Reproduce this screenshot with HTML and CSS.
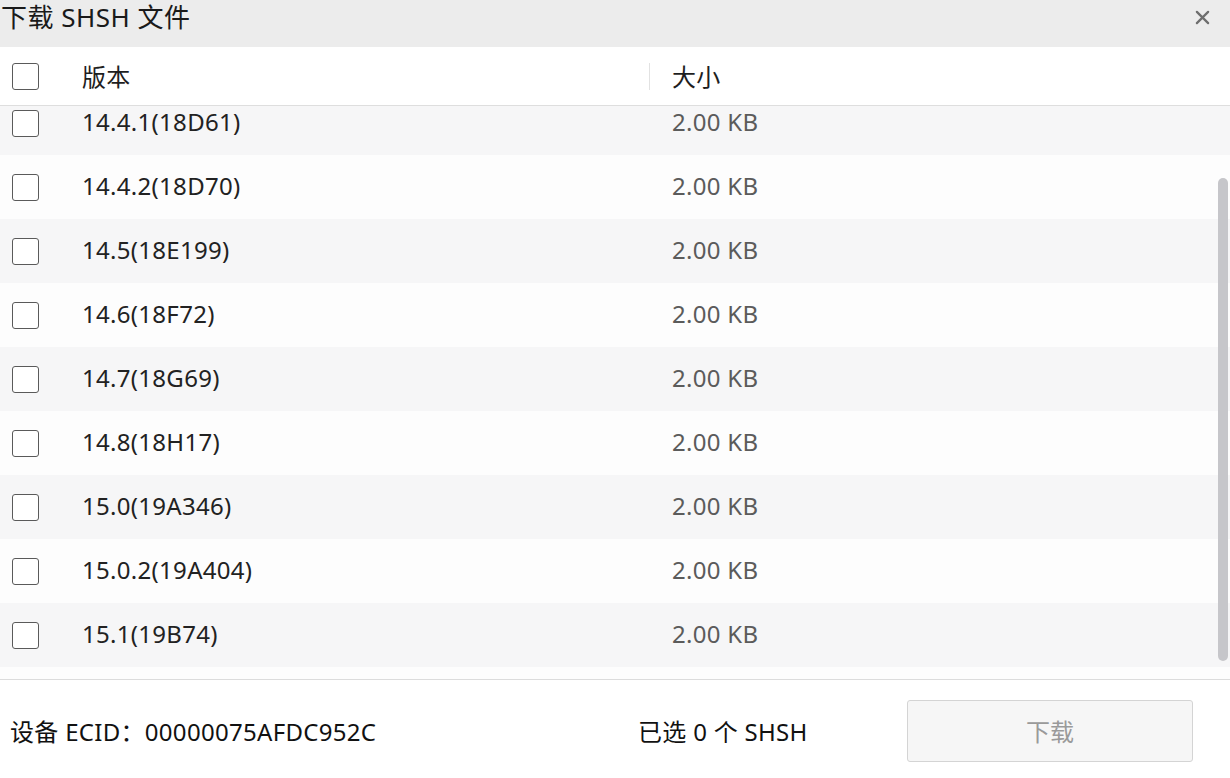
FILE: index.html
```html
<!DOCTYPE html>
<html lang="zh-CN">
<head>
    <meta charset="UTF-8">
    <title>下载 SHSH 文件</title>
    <link rel="stylesheet" href="styles.css">
</head>
<body>
<div class="dialog">
    <div class="titlebar">
        <span class="title">下载 SHSH 文件</span>
        <svg class="close" viewBox="0 0 16 16" width="16" height="16">
            <path d="M2 2L14 14M14 2L2 14" stroke="#6e6e6e" stroke-width="2.4" stroke-linecap="round"/>
        </svg>
    </div>

    <div class="table-head">
        <span class="cell-check"><span class="checkbox"></span></span>
        <span class="th-version">版本</span>
        <span class="th-size">大小</span>
    </div>

    <div class="list">
        <div class="rows">
            <div class="row"><span class="cell-check"><span class="checkbox"></span></span><span class="version">14.4.1(18D61)</span><span class="size">2.00 KB</span></div>
            <div class="row"><span class="cell-check"><span class="checkbox"></span></span><span class="version">14.4.2(18D70)</span><span class="size">2.00 KB</span></div>
            <div class="row"><span class="cell-check"><span class="checkbox"></span></span><span class="version">14.5(18E199)</span><span class="size">2.00 KB</span></div>
            <div class="row"><span class="cell-check"><span class="checkbox"></span></span><span class="version">14.6(18F72)</span><span class="size">2.00 KB</span></div>
            <div class="row"><span class="cell-check"><span class="checkbox"></span></span><span class="version">14.7(18G69)</span><span class="size">2.00 KB</span></div>
            <div class="row"><span class="cell-check"><span class="checkbox"></span></span><span class="version">14.8(18H17)</span><span class="size">2.00 KB</span></div>
            <div class="row"><span class="cell-check"><span class="checkbox"></span></span><span class="version">15.0(19A346)</span><span class="size">2.00 KB</span></div>
            <div class="row"><span class="cell-check"><span class="checkbox"></span></span><span class="version">15.0.2(19A404)</span><span class="size">2.00 KB</span></div>
            <div class="row"><span class="cell-check"><span class="checkbox"></span></span><span class="version">15.1(19B74)</span><span class="size">2.00 KB</span></div>
        </div>
        <div class="scrollbar"></div>
    </div>

    <div class="footer">
        <span class="ecid">设备 ECID：00000075AFDC952C</span>
        <span class="selected">已选 0 个 SHSH</span>
        <button class="download" disabled>下载</button>
    </div>
</div>
</body>
</html>
```

FILE: styles.css
```css
* {
    box-sizing: border-box;
    margin: 0;
    padding: 0;
}

body {
    background-color: #fdfdfd;
    font-family: 'Noto Sans', 'Noto Sans CJK SC', sans-serif;
    color: #1e1e1e;
    width: 1230px;
    height: 778px;
    overflow: hidden;
}

.dialog {
    display: flex;
    flex-direction: column;
    height: 778px;
}

/* 标题栏 */
.titlebar {
    height: 47px;
    background-color: #ececec;
    display: flex;
    align-items: flex-start;
    justify-content: space-between;
    padding: 1px 20px 0 1px;
}

.title {
    font-size: 26px;
    line-height: 32px;
    letter-spacing: 0.5px;
    color: #1a1a1a;
}

.close {
    width: 15px;
    height: 15px;
    margin-top: 9px;
}

/* 表头 */
.table-head {
    height: 59px;
    display: grid;
    grid-template-columns: 82px 567px 1fr;
    align-items: center;
    border-bottom: 1px solid #dedede;
    background-color: #fff;
    font-size: 24px;
    letter-spacing: 0.3px;
}

.cell-check {
    display: flex;
    align-items: center;
    padding-left: 12px;
}

.checkbox {
    display: block;
    width: 27px;
    height: 27px;
    border: 1.5px solid #5a5a5a;
    border-radius: 3px;
    background-color: #fff;
}

.th-version {
    margin-top: -2px;
}

.th-size {
    border-left: 1px solid #e2e2e2;
    padding-left: 22px;
    line-height: 27px;
}

/* 列表 */
.list {
    position: relative;
    height: 573px;
    overflow: hidden;
}

.rows {
    margin-top: -15px;
}

.row {
    height: 64px;
    display: grid;
    grid-template-columns: 82px 567px 1fr;
    align-items: center;
    font-size: 24px;
    letter-spacing: 0.3px;
}

.row:nth-child(odd) {
    background-color: #f6f6f7;
}

.row:nth-child(even) {
    background-color: #fdfdfd;
}

.version {
    color: #222;
    margin-top: -3px;
}

.size {
    padding-left: 23px;
    color: #5b5b5b;
    margin-top: -3px;
}

.scrollbar {
    position: absolute;
    right: 2px;
    top: 72px;
    width: 10px;
    height: 483px;
    border-radius: 5px;
    background-color: #c6c6ca;
}

/* 底部 */
.footer {
    flex: 1;
    border-top: 1px solid #dcdcdc;
    background-color: #fff;
    display: grid;
    grid-template-columns: 628px 1fr 286px;
    align-items: center;
    padding: 0 37px 0 10px;
    font-size: 24px;
    letter-spacing: 0.3px;
    color: #111;
}

.ecid,
.selected {
    margin-top: 3px;
}

.download {
    height: 62px;
    border: 1px solid #d4d4d4;
    border-radius: 3px;
    background-color: #f6f6f6;
    color: #9a9a9a;
    font-family: inherit;
    font-size: 24px;
    margin-top: 3px;
}
```
